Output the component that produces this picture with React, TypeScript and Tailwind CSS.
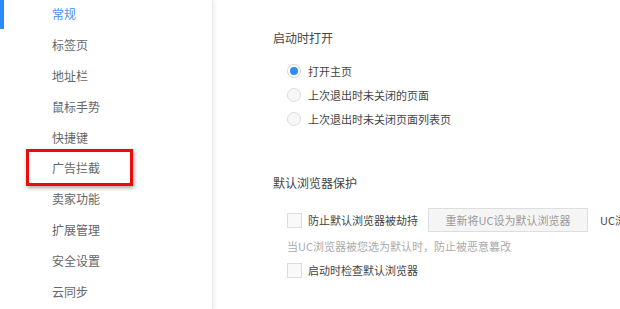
import React from 'react';

const font = { fontFamily: '"Noto Sans CJK SC", "Noto Sans", sans-serif' };

const navItems = [
  '常规',
  '标签页',
  '地址栏',
  '鼠标手势',
  '快捷键',
  '广告拦截',
  '卖家功能',
  '扩展管理',
  '安全设置',
  '云同步',
];

const Radio: React.FC<{ checked?: boolean; label: string }> = ({ checked, label }) => (
  <label className="flex h-6 items-center">
    <span
      className={
        checked
          ? 'flex h-[14px] w-[14px] items-center justify-center rounded-full border border-[#d6d6d6] bg-white'
          : 'h-[14px] w-[14px] rounded-full border border-[#dcdcdc] bg-[#f7f7f7]'
      }
    >
      {checked && <span className="h-[8px] w-[8px] rounded-full bg-[#2d8cf0]" />}
    </span>
    <span className="ml-[7px] text-[11px] text-[#444]">{label}</span>
  </label>
);

const Checkbox: React.FC<{ label: string; className?: string }> = ({ label, className }) => (
  <label className={'flex shrink-0 items-center ' + (className ?? '')}>
    <span className="h-[15px] w-[15px] shrink-0 border border-[#dcdcdc] bg-[#f9f9f9]" />
    <span className="ml-[6px] text-[11px] text-[#444]">{label}</span>
  </label>
);

export default function App() {
  return (
    <div className="flex h-[309px] w-[620px] overflow-hidden bg-white" style={font}>
      <nav className="relative z-10 w-[213px] shrink-0 border-r border-[#e8e8e8] bg-white shadow-[2px_0_4px_rgba(0,0,0,0.06)]">
        {navItems.map((item, i) => (
          <div key={item} className="relative flex h-[30.8px] items-center pl-[52px]">
            {i === 0 && <span className="absolute left-0 top-0 h-[29px] w-[4px] bg-[#2b8af7]" />}
            <span
              className={
                i === 0
                  ? 'relative -top-px text-[12px] text-[#4a90f0]'
                  : 'relative -top-px text-[12px] text-[#666]'
              }
            >
              {item}
            </span>
            {i === 5 && (
              <span className="absolute left-[26px] top-[-5px] h-[37px] w-[107px] border-[3px] border-[#ee0a0a] shadow-[1px_2px_4px_rgba(0,0,0,0.35)]" />
            )}
          </div>
        ))}
      </nav>

      <main className="flex min-w-0 flex-1 flex-col pl-[60px] pt-[28px]">
        <h2 className="h-5 text-[12px] leading-5 text-[#444]">启动时打开</h2>
        <div className="mt-[11px] flex flex-col pl-[14px]">
          <Radio checked label="打开主页" />
          <Radio label="上次退出时未关闭的页面" />
          <Radio label="上次退出时未关闭页面列表页" />
        </div>

        <h2 className="mt-[42px] h-5 text-[12px] leading-5 text-[#444]">默认浏览器保护</h2>
        <div className="mt-[15px] flex h-6 items-center whitespace-nowrap pl-[14px]">
          <Checkbox className="w-[141px]" label="防止默认浏览器被劫持" />
          <button className="h-6 w-[160px] shrink-0 border border-[#dedede] bg-[#f5f5f5] text-[11px] text-[#999]">
            重新将UC设为默认浏览器
          </button>
          <span className="ml-[12px] text-[11px] text-[#444]">UC浏览器</span>
        </div>
        <p className="mt-[4px] h-5 pl-[14px] text-[11px] leading-5 text-[#aaa]">
          当UC浏览器被您选为默认时，防止被恶意篡改
        </p>
        <div className="mt-[2px] flex h-6 items-center pl-[14px]">
          <Checkbox label="启动时检查默认浏览器" />
        </div>
      </main>
    </div>
  );
}
